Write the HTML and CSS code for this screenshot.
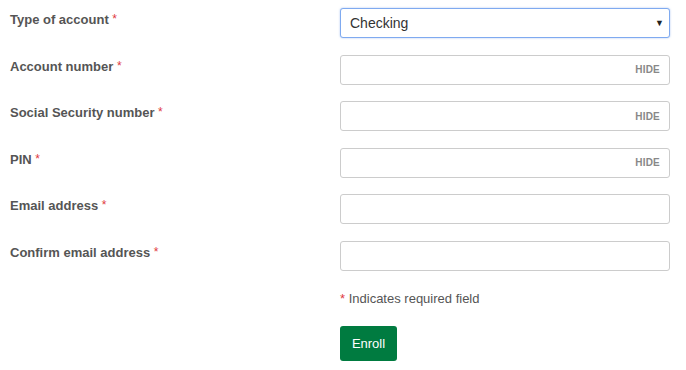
FILE: index.html
```html
<!DOCTYPE html>
<html>
<head>
<meta charset="utf-8">
<link rel="stylesheet" href="styles.css">
</head>
<body>
<form class="form">
  <div class="row">
    <label class="label">Type of account <span class="req">*</span></label>
    <div class="control select">
      <span class="select-text">Checking</span>
      <span class="arrow">&#9660;</span>
    </div>
  </div>
  <div class="row">
    <label class="label">Account number <span class="req">*</span></label>
    <div class="control"><span class="hide">HIDE</span></div>
  </div>
  <div class="row">
    <label class="label">Social Security number <span class="req">*</span></label>
    <div class="control"><span class="hide">HIDE</span></div>
  </div>
  <div class="row">
    <label class="label">PIN <span class="req">*</span></label>
    <div class="control"><span class="hide">HIDE</span></div>
  </div>
  <div class="row">
    <label class="label">Email address <span class="req">*</span></label>
    <div class="control"></div>
  </div>
  <div class="row">
    <label class="label">Confirm email address <span class="req">*</span></label>
    <div class="control"></div>
  </div>
  <div class="footer">
    <p class="note"><span class="req">*</span> Indicates required field</p>
    <button type="button" class="btn">Enroll</button>
  </div>
</form>
</body>
</html>
```
FILE: styles.css
```css
html, body {
  margin: 0;
  padding: 0;
  background: #fff;
}
body {
  font-family: "Liberation Sans", Arial, sans-serif;
  color: #555;
}
.form {
  padding: 8px 0 0 10px;
  display: flex;
  flex-direction: column;
  gap: 16.6px;
}
.row {
  display: grid;
  grid-template-columns: 330px 330px;
  align-items: start;
}
.label {
  font-size: 13px;
  font-weight: bold;
  line-height: 20px;
  padding-top: 2px;
  color: #555;
}
.req {
  color: #e0393e;
  font-weight: normal;
  font-size: 12px;
  position: relative;
  top: -1px;
}
.control {
  box-sizing: border-box;
  height: 30px;
  border: 1px solid #ccc;
  border-radius: 3px;
  background: #fff;
  display: flex;
  align-items: center;
  justify-content: flex-end;
  padding: 0 9px;
}
.select {
  border-color: #7faaf0;
  box-shadow: 0 0 2px rgba(102, 150, 230, 0.6);
  justify-content: space-between;
  padding: 0 5px 0 9px;
}
.select-text {
  font-size: 14px;
  color: #333;
}
.arrow {
  font-size: 9px;
  color: #222;
}
.hide {
  font-size: 10px;
  font-weight: bold;
  color: #888;
  letter-spacing: 0.2px;
}
.footer {
  padding-left: 330px;
  display: flex;
  flex-direction: column;
  align-items: flex-start;
}
.note {
  margin: 0;
  font-size: 13px;
  line-height: 20px;
  color: #555;
  padding-top: 1px;
}
.note .req {
  font-size: 13px;
  top: 0;
}
.btn {
  margin-top: 17px;
  width: 57px;
  height: 35px;
  border: 0;
  border-radius: 3px;
  background: #007b40;
  color: #fff;
  font-family: "Liberation Sans", Arial, sans-serif;
  font-size: 13px;
  padding: 0;
}
```
